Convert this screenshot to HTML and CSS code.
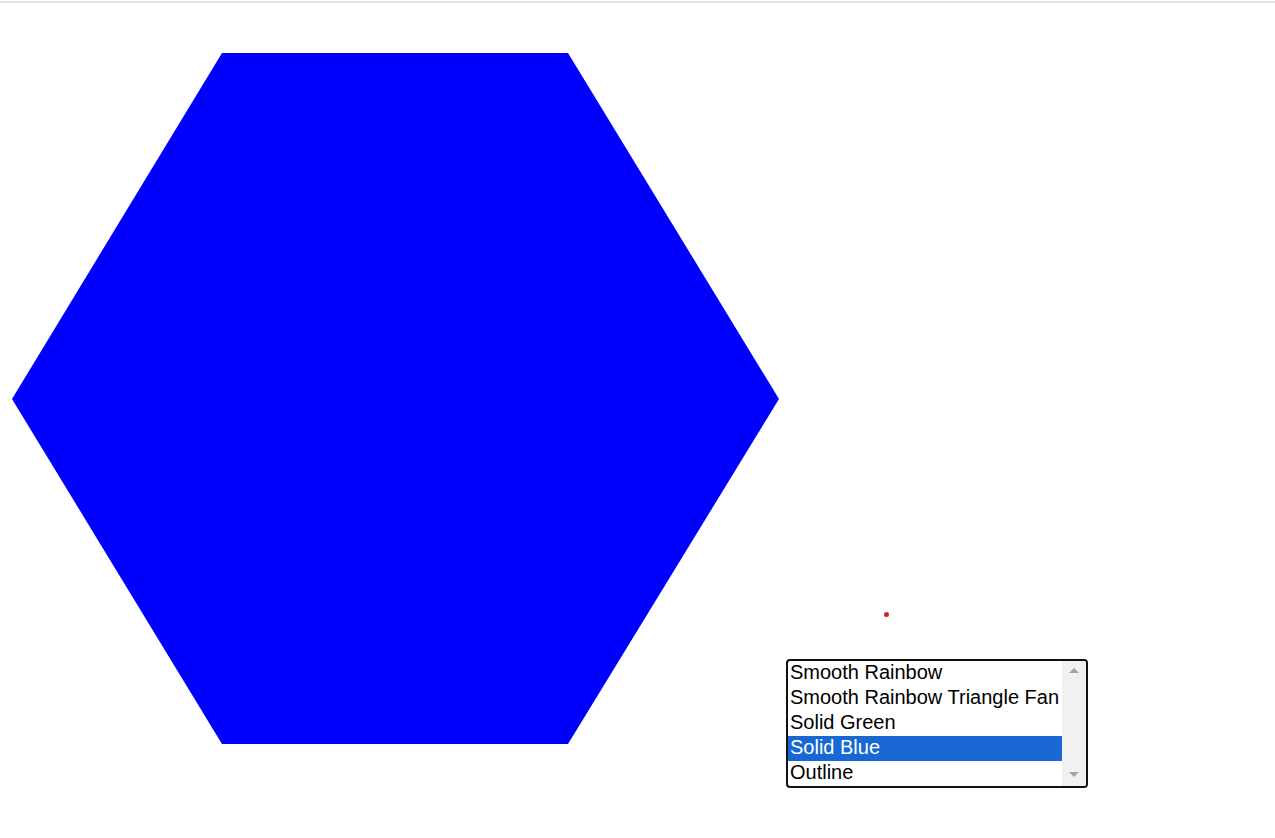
FILE: index.html
```html
<!DOCTYPE html>
<html>
<head>
<meta charset="utf-8">
<link rel="stylesheet" href="styles.css">
</head>
<body>
<div class="topline"></div>
<main class="stage">
  <svg class="canvas" width="786" height="785" viewBox="0 0 786 785">
    <polygon points="222,50 568,50 779,396 568,741 222,741 12,396" fill="#0000ff"/>
  </svg>
  <div class="side">
    <div class="dot"></div>
    <div class="listbox" role="listbox">
      <div class="options">
        <div class="opt">Smooth Rainbow</div>
        <div class="opt">Smooth Rainbow Triangle Fan</div>
        <div class="opt">Solid Green</div>
        <div class="opt selected">Solid Blue</div>
        <div class="opt">Outline</div>
      </div>
      <div class="scrollbar">
        <span class="arrow up"></span>
        <span class="arrow down"></span>
      </div>
    </div>
  </div>
</main>
</body>
</html>
```

FILE: styles.css
```css
html, body {
  margin: 0;
  padding: 0;
  background: #ffffff;
  font-family: "Liberation Sans", Arial, sans-serif;
}
.topline {
  margin-top: 1px;
  height: 2px;
  background: #dce6e2;
}
.stage {
  display: flex;
  align-items: flex-end;
}
.canvas {
  display: block;
  flex: none;
}
.side {
  display: flex;
  flex-direction: column;
}
.dot {
  width: 5px;
  height: 5px;
  border-radius: 50%;
  background: #e8161b;
  margin-left: 98px;
  margin-bottom: 42px;
}
.listbox {
  display: flex;
  width: 298px;
  height: 125px;
  border: 2px solid #111111;
  border-radius: 4px;
  overflow: hidden;
}
.options {
  width: 274px;
  display: flex;
  flex-direction: column;
}
.opt {
  height: 25px;
  line-height: 22px;
  box-sizing: border-box;
  padding: 0 0 3px 2px;
  font-size: 20px;
  color: #000000;
  white-space: nowrap;
}
.opt.selected {
  background: #1967d2;
  color: #ffffff;
}
.scrollbar {
  width: 24px;
  background: #f1f1f1;
  display: flex;
  flex-direction: column;
  justify-content: space-between;
  align-items: center;
  padding: 7px 0 9px;
}
.arrow {
  width: 0;
  height: 0;
  border-left: 5px solid transparent;
  border-right: 5px solid transparent;
}
.arrow.up {
  border-bottom: 5px solid #a3a3a3;
}
.arrow.down {
  border-top: 5px solid #a3a3a3;
}
```
